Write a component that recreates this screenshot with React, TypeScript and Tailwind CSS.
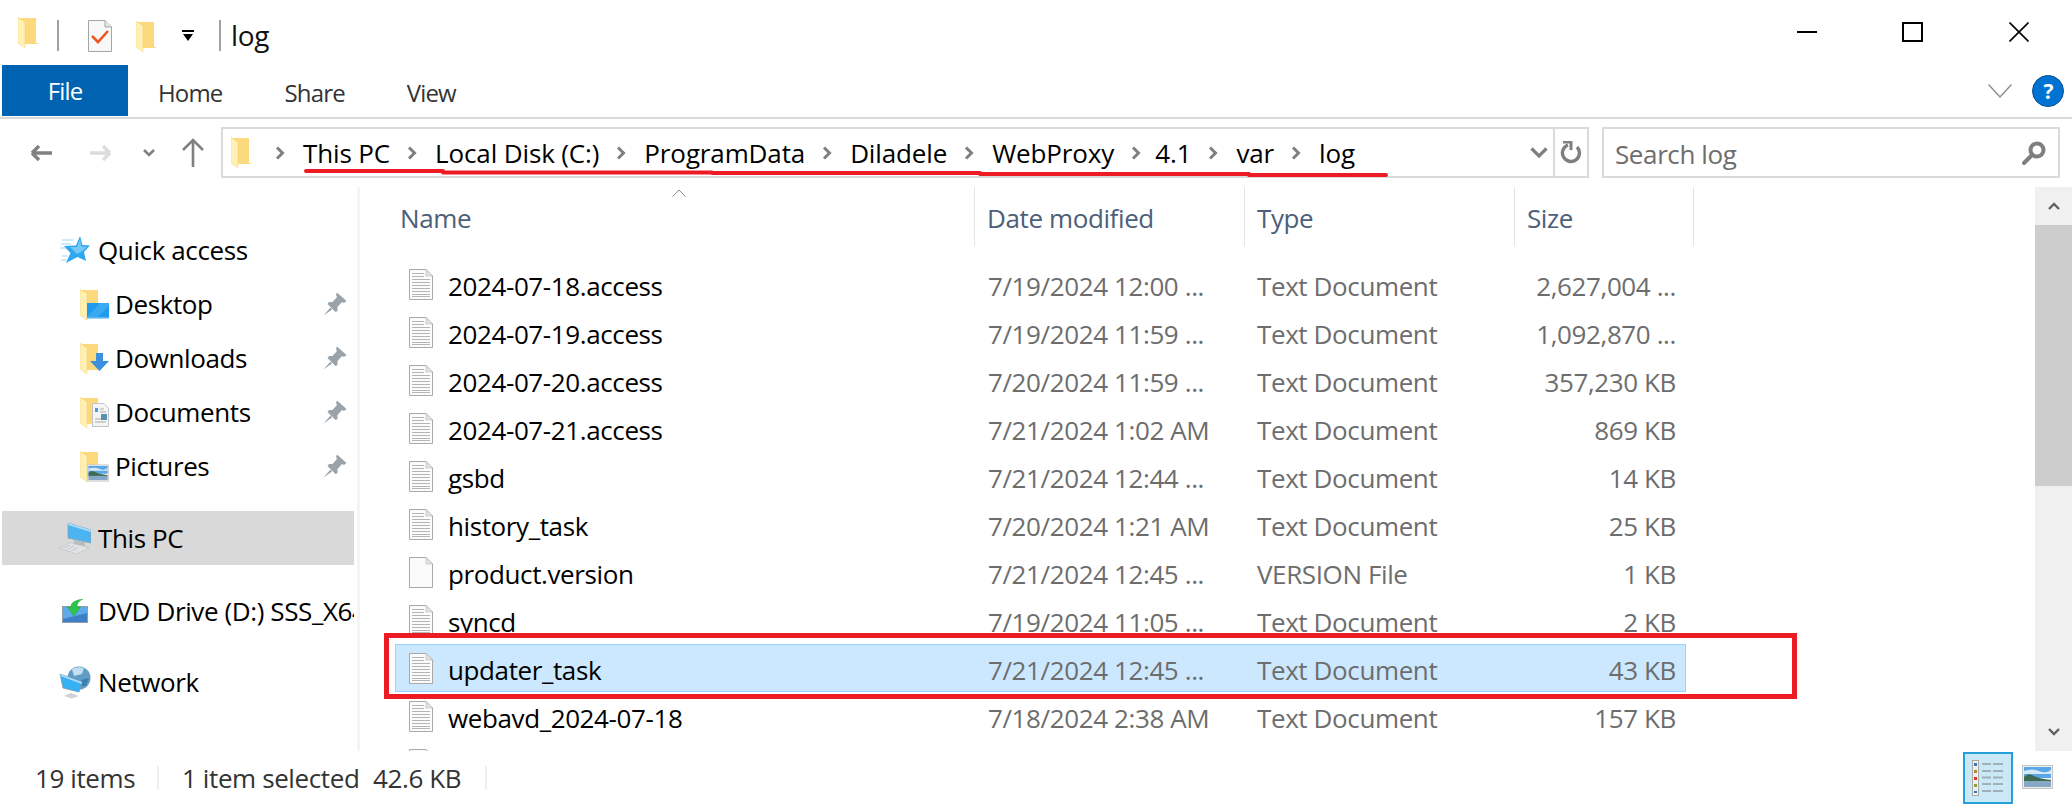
const font = "font-['Open_Sans','Noto_Sans',sans-serif]";

const rows = [
  { name: '2024-07-18.access', date: '7/19/2024 12:00 ...', type: 'Text Document', size: '2,627,004 ...' },
  { name: '2024-07-19.access', date: '7/19/2024 11:59 ...', type: 'Text Document', size: '1,092,870 ...' },
  { name: '2024-07-20.access', date: '7/20/2024 11:59 ...', type: 'Text Document', size: '357,230 KB' },
  { name: '2024-07-21.access', date: '7/21/2024 1:02 AM', type: 'Text Document', size: '869 KB' },
  { name: 'gsbd', date: '7/21/2024 12:44 ...', type: 'Text Document', size: '14 KB' },
  { name: 'history_task', date: '7/20/2024 1:21 AM', type: 'Text Document', size: '25 KB' },
  { name: 'product.version', date: '7/21/2024 12:45 ...', type: 'VERSION File', size: '1 KB', blank: true },
  { name: 'syncd', date: '7/19/2024 11:05 ...', type: 'Text Document', size: '2 KB' },
  { name: 'updater_task', date: '7/21/2024 12:45 ...', type: 'Text Document', size: '43 KB', selected: true },
  { name: 'webavd_2024-07-18', date: '7/18/2024 2:38 AM', type: 'Text Document', size: '157 KB' },
  { name: '', date: '', type: '', size: '' },
];

const crumbs = ['This PC', 'Local Disk (C:)', 'ProgramData', 'Diladele', 'WebProxy', '4.1', 'var', 'log'];

function Folder({ className = '' }: { className?: string }) {
  return (
    <svg viewBox="0 0 20 31" className={className}>
      <path d="M0 1 H18 V26 H20 V27 H7 L0 26 Z" fill="#fbd97c" />
      <path d="M0 0 L7 5 V31 L0 26 Z" fill="#fff0b5" />
      <path d="M0 0 L7 5 V31 L0 26 Z" fill="none" stroke="#f2c95f" strokeWidth="0.4" />
    </svg>
  );
}

function FileIcon({ blank = false }: { blank?: boolean }) {
  return (
    <svg viewBox="0 0 24 31" className="h-[31px] w-6 shrink-0">
      <path d="M0.5 0.5 H17 L23.5 7 V30.5 H0.5 Z" fill="#fbfbfb" stroke="#a9a9a9" />
      <path d="M17 0.5 V7 H23.5 Z" fill="#e4e4e4" stroke="#b5b5b5" strokeWidth="0.6" />
      {!blank && (
        <path
          d="M3 4.5 H15 M3 7.5 H15 M3 10.5 H21 M3 13.5 H21 M3 16.5 H21 M3 19.5 H21 M3 22.5 H21 M3 25.5 H21 M3 27.5 H21"
          stroke="#b4b4b4"
          strokeWidth="1"
        />
      )}
    </svg>
  );
}

function Chevron({ className = '' }: { className?: string }) {
  return (
    <svg viewBox="0 0 10 14" className={`h-3.5 w-2.5 shrink-0 ${className}`}>
      <path d="M2 1.5 L7.5 7 L2 12.5" fill="none" stroke="#7f7f7f" strokeWidth="3" />
    </svg>
  );
}

function Pin() {
  return (
    <svg viewBox="0 0 24 24" className="h-6 w-6 shrink-0">
      <path d="M14 0.5 L23.5 9 L21 11 L19 10 L14.5 15 L14.5 19 L12.5 20 L4.5 12 L6 10 L9.5 10 L14 5 L13 3 Z" fill="#9aa3a9" />
      <path d="M7.5 15.5 L0.5 23.5 L9 17.5 Z" fill="#9aa3a9" />
    </svg>
  );
}

function Star() {
  return (
    <svg viewBox="0 0 30 28" className="h-7 w-[30px] shrink-0">
      <path d="M2 4 H14 M1 8 H11 M0 12 H8 M2 20 H8 M1 24 H7" stroke="#bfe3fb" strokeWidth="1.4" />
      <path d="M20 0 L22.5 9 L30 9.5 L24 16 L26 25 L17.5 21 L6 27 L10.5 17 L4 10 L16 9.5 Z" fill="#2fa6f0" />
      <path d="M20 3 L21.5 10.5 L27 11 L22 15.5 L17 18 L10 11 L17 11 Z" fill="#74c8f8" />
    </svg>
  );
}

function DesktopFolder() {
  return (
    <div className="relative h-[31px] w-[29px] shrink-0">
      <Folder className="h-[31px] w-5" />
      <svg viewBox="0 0 22 16" className="absolute bottom-px right-0 h-4 w-[22px]">
        <rect width="22" height="16" fill="#1e9bee" />
        <path d="M0 16 H22 V14.5 H0 Z" fill="#9fd2f5" />
        <path d="M0 14 L13 0 H22 V3 L11 14 Z" fill="#53b9f6" opacity="0.5" />
      </svg>
    </div>
  );
}

function DownloadsFolder() {
  return (
    <div className="relative h-[31px] w-[29px] shrink-0">
      <Folder className="h-[31px] w-5" />
      <svg viewBox="0 0 19 18" className="absolute bottom-[3px] right-0 h-[18px] w-[19px]">
        <path d="M6 0 H13 V8 H19 L9.5 18 L0 8 H6 Z" fill="#3c8fdc" />
      </svg>
    </div>
  );
}

function DocumentsFolder() {
  return (
    <div className="relative h-[31px] w-[29px] shrink-0">
      <Folder className="h-[31px] w-5" />
      <svg viewBox="0 0 17 24" className="absolute bottom-px right-0 h-6 w-[17px]">
        <path d="M0.5 0.5 H12 L16.5 5 V23.5 H0.5 Z" fill="#f5f5f5" stroke="#c4c4c4" />
        <path d="M3 5 H6 V9 H3 Z" fill="#4a9ae0" />
        <path d="M8 6 H12 M8 9 H14 M3 19 H14 M3 16 H9" stroke="#a9a9a9" />
        <rect x="9" y="11" width="6" height="6" fill="#5a8fb0" />
      </svg>
    </div>
  );
}

function Landscape({ className = '' }: { className?: string }) {
  return (
    <svg viewBox="0 0 31 24" className={className}>
      <rect x="0.5" y="0.5" width="30" height="23" fill="#efefef" stroke="#c4c4c4" />
      <rect x="2" y="2" width="27" height="11" fill="#5aa6e6" />
      <path d="M2 6 Q10 3 17 6 T29 5 V9 H2 Z" fill="#d4e9f8" />
      <path d="M2 12 Q6 8 10 10 Q17 14 29 15 V17 H2 Z" fill="#3f6b55" />
      <rect x="2" y="16" width="27" height="6" fill="#86a8c4" />
    </svg>
  );
}

function PicturesFolder() {
  return (
    <div className="relative h-[31px] w-[29px] shrink-0">
      <Folder className="h-[31px] w-5" />
      <Landscape className="absolute bottom-0 right-0 h-[18px] w-[22px]" />
    </div>
  );
}

function Computer() {
  return (
    <svg viewBox="0 0 32 33" className="h-[33px] w-8 shrink-0">
      <path d="M9 1 L32 8 V21 L9 16 Z" fill="#4db4f4" stroke="#8aa0ae" strokeWidth="0.8" />
      <path d="M9 1 L32 8 V10 L9 3 Z" fill="#a9dcf9" />
      <path d="M15 18 L26 20.5 V24 L15 22 Z" fill="#b4bcc2" />
      <path d="M0 26 L11 20.5 L30 26 L18 32 Z" fill="#e1e3e5" stroke="#b9bdc0" strokeWidth="0.6" />
      <path d="M4 26 L11 23 M8 27.5 L15 24 M12 29 L19 25.5" stroke="#b9bdc0" strokeWidth="0.8" />
    </svg>
  );
}

function Dvd() {
  return (
    <svg viewBox="0 0 26 24" className="h-6 w-[26px] shrink-0">
      <rect x="0.5" y="7.5" width="25" height="16" fill="#3d7fc9" stroke="#929ea8" />
      <path d="M1 8 H25 V14 L1 20 Z" fill="#5ea9e8" />
      <path d="M12 17 L5.5 8 H9 C9 3 14 1 21 0 C17 2 15 4 15 8 H18.5 Z" fill="#2ec44a" stroke="#23a03a" strokeWidth="0.5" />
    </svg>
  );
}

function NetworkIcon() {
  return (
    <svg viewBox="0 0 32 33" className="h-[33px] w-8 shrink-0">
      <circle cx="20" cy="12" r="11.5" fill="#5f9cc7" />
      <path d="M13 3 Q19 0 25 2 L23 8 L15 10 Z" fill="#c3deef" />
      <path d="M22 14 L30 12 L27 20 L23 20 Z" fill="#3f7fa9" />
      <path d="M1 8 L23 16 L20 26 L4 22 Z" fill="#35b0f5" stroke="#7f97a6" strokeWidth="0.8" />
      <path d="M1 8 L23 16 L22.5 18 L1.5 10 Z" fill="#a7daf8" />
      <path d="M5 30 L12 27 L20 30 L13 32.5 Z" fill="#cfd3d6" />
    </svg>
  );
}

function NavRow({ icon, label, pin = false, active = false, indent = false }: {
  icon: React.ReactNode;
  label: string;
  pin?: boolean;
  active?: boolean;
  indent?: boolean;
}) {
  return (
    <div className={`flex h-[54px] items-center overflow-hidden ${indent ? 'pl-[78px]' : 'pl-[54px]'} ${active ? 'bg-[#d9d9d9]' : ''}`}>
      <div className={`flex shrink-0 items-center ${indent ? 'w-[31px]' : 'w-[38px] justify-center'}`}>{icon}</div>
      <span className="ml-1 whitespace-nowrap text-black">{label}</span>
      {pin && (
        <span className="ml-auto mr-[7px]">
          <Pin />
        </span>
      )}
    </div>
  );
}

export default function App() {
  return (
    <div className={`relative flex h-[805px] w-[2072px] flex-col overflow-hidden bg-white text-[26px] leading-none tracking-[-0.015em] ${font}`}>
      {/* title bar */}
      <div className="flex h-[65px] shrink-0 items-start">
        <Folder className="ml-[18px] mt-[17px] h-[31px] w-5" />
        <div className="ml-[19px] mt-5 h-[31px] w-0.5 bg-[#a0a0a0]" />
        <svg viewBox="0 0 24 32" className="ml-[29px] mt-5 h-8 w-6">
          <path d="M0.5 0.5 H17 L23.5 7 V31.5 H0.5 Z" fill="#f8f8f8" stroke="#a5a5a5" />
          <path d="M17 0.5 V7 H23.5" fill="#e6e6e6" stroke="#a5a5a5" />
          <path d="M4 16 L10 22 L20 11" fill="none" stroke="#f0561e" strokeWidth="2.6" />
        </svg>
        <Folder className="ml-6 mt-[21px] h-[31px] w-5" />
        <svg viewBox="0 0 12 11" className="ml-[26px] mt-[30px] h-[11px] w-3">
          <path d="M0 0 H12 V2 H0 Z M1 4 H11 L6 11 Z" fill="#000" />
        </svg>
        <div className="ml-[25px] mt-5 h-[31px] w-0.5 bg-[#a0a0a0]" />
        <span className="ml-[10px] mt-[21px] text-[28px] text-[#111]">log</span>
        <div className="ml-auto mt-[22px] flex items-start">
          <div className="mt-[9px] h-0.5 w-5 bg-black" />
          <div className="ml-[85px] h-5 w-[21px] border-2 border-black" />
          <svg viewBox="0 0 20 20" className="ml-[86px] mr-[43px] h-5 w-5">
            <path d="M0.5 0.5 L19.5 19.5 M19.5 0.5 L0.5 19.5" stroke="#000" strokeWidth="1.6" />
          </svg>
        </div>
      </div>

      {/* ribbon tabs */}
      <div className="flex h-[54px] shrink-0 items-start border-b-2 border-[#dadada] text-[24px] tracking-[-0.035em]">
        <div className="ml-0.5 flex h-[51px] w-[126px] items-center justify-center bg-[#0063b1] text-white">File</div>
        <span className="ml-[30px] mt-[16px] text-[#333]">Home</span>
        <span className="ml-[62px] mt-[16px] text-[#333]">Share</span>
        <span className="ml-[62px] mt-[16px] text-[#333]">View</span>
        <div className="ml-auto mr-2 flex items-center gap-5 pt-2.5">
          <svg viewBox="0 0 24 14" className="h-3.5 w-6">
            <path d="M0.5 0.5 L12 13 L23.5 0.5" fill="none" stroke="#8c8c8c" strokeWidth="1.4" />
          </svg>
          <div className="flex h-8 w-8 items-center justify-center rounded-full border border-[#0a4f94] bg-[#0072d2] text-[21px] font-bold text-white">?</div>
        </div>
      </div>

      {/* address bar */}
      <div className="mt-2 flex h-[51px] shrink-0 items-center">
        <div className="flex w-[221px] shrink-0 items-center">
          <svg viewBox="0 0 22 18" className="ml-[31px] h-[18px] w-[22px]">
            <path d="M1 9 H21 M1 9 L8 2 M1 9 L8 16" fill="none" stroke="#808080" strokeWidth="3.4" />
          </svg>
          <svg viewBox="0 0 22 18" className="ml-[36px] h-[18px] w-[22px]">
            <path d="M1 9 H21 M21 9 L14 2 M21 9 L14 16" fill="none" stroke="#dcdcdc" strokeWidth="3.4" />
          </svg>
          <svg viewBox="0 0 12 8" className="ml-8 h-2 w-3">
            <path d="M1 1 L6 6 L11 1" fill="none" stroke="#808080" strokeWidth="2.6" />
          </svg>
          <svg viewBox="0 0 22 29" className="ml-[27px] h-[29px] w-[22px]">
            <path d="M11 29 V2 M1 12 L11 2 L21 12" fill="none" stroke="#808080" strokeWidth="2.6" />
          </svg>
        </div>
        <div className="flex h-[51px] w-[1368px] shrink-0 items-center border-2 border-[#dadada] pl-2">
          <Folder className="h-[31px] w-5 shrink-0" />
          <div className="ml-6 flex items-center gap-[17px] tracking-[-0.005em] text-black">
            {crumbs.map((c) => (
              <div key={c} className="flex items-center gap-[18px]">
                <Chevron />
                <span className={c === '4.1' ? '-ml-1' : ''}>{c}</span>
              </div>
            ))}
          </div>
          <svg viewBox="0 0 18 12" className="ml-auto h-3 w-[18px] shrink-0">
            <path d="M1.5 1.5 L9 9 L16.5 1.5" fill="none" stroke="#7f7f7f" strokeWidth="3.2" />
          </svg>
          <div className="ml-[5px] flex h-full w-[34px] shrink-0 items-center justify-center border-l-2 border-[#dadada]">
            <svg viewBox="0 0 22 24" className="h-6 w-[22px]">
              <path d="M8 4 A8.5 8.5 0 1 0 17 6" fill="none" stroke="#7f7f7f" strokeWidth="3.4" />
              <path d="M3 1 H11 V9" fill="none" stroke="#7f7f7f" strokeWidth="3" />
            </svg>
          </div>
        </div>
        <div className="ml-[13px] flex h-[51px] w-[458px] shrink-0 items-center justify-between border-2 border-[#dadada] pl-[11px] pr-[12px] text-[#6d6d6d]">
          <span className="pt-0.5">Search log</span>
          <svg viewBox="0 0 24 24" className="h-6 w-6">
            <circle cx="15" cy="9" r="6.5" fill="none" stroke="#7f7f7f" strokeWidth="4" />
            <path d="M10 14 L2 22" stroke="#7f7f7f" strokeWidth="4" strokeLinecap="round" />
          </svg>
        </div>
      </div>

      {/* body */}
      <div className="mt-[9px] flex h-[564px] shrink-0">
        <div className="flex w-[357px] shrink-0 flex-col">
          <div className="pl-0.5 pr-[3px] pt-9">
            <NavRow icon={<Star />} label="Quick access" />
            <NavRow icon={<DesktopFolder />} label="Desktop" pin indent />
            <NavRow icon={<DownloadsFolder />} label="Downloads" pin indent />
            <NavRow icon={<DocumentsFolder />} label="Documents" pin indent />
            <NavRow icon={<PicturesFolder />} label="Pictures" pin indent />
            <div className="h-[18px]" />
            <NavRow icon={<Computer />} label="This PC" active />
            <div className="h-[19px]" />
            <NavRow icon={<Dvd />} label="DVD Drive (D:) SSS_X64FRE_EN-US" />
            <div className="h-[17px]" />
            <NavRow icon={<NetworkIcon />} label="Network" />
          </div>
        </div>
        <div className="w-[3px] shrink-0 bg-[#f5f5f5]" />

        <div className="relative flex min-w-0 flex-1 flex-col overflow-hidden">
          {/* header */}
          <div className="flex h-[59px] shrink-0 items-center text-[#4c607a]">
            <div className="relative flex h-full w-[614px] shrink-0 items-center pl-10 pt-0.5">
              Name
              <svg viewBox="0 0 14 8" className="absolute left-[312px] top-[2px] h-2 w-3.5">
                <path d="M0.5 7.5 L7 1 L13.5 7.5" fill="none" stroke="#8c8c8c" strokeWidth="1" />
              </svg>
            </div>
            <div className="flex h-full w-[270px] shrink-0 items-center border-l border-[#e5e5e5] pl-3 pt-0.5">Date modified</div>
            <div className="flex h-full w-[270px] shrink-0 items-center border-l border-[#e5e5e5] pl-3 pt-0.5">Type</div>
            <div className="flex h-full w-[180px] shrink-0 items-center border-x border-[#e5e5e5] pl-3 pt-0.5">Size</div>
          </div>
          {/* rows */}
          <div className="mt-[14px] flex flex-col pl-[35px]">
            {rows.map((r, i) => (
              <div
                key={i}
                className={`flex h-[48px] w-[1291px] shrink-0 items-center border ${r.selected ? 'border-[#99d1ff] bg-[#cce8ff]' : 'border-transparent'}`}
              >
                <div className="ml-[13px] flex w-[566px] shrink-0 items-center gap-[15px] text-black">
                  <FileIcon blank={r.blank} />
                  <span className="pt-1">{r.name}</span>
                </div>
                <div className="w-[269px] shrink-0 whitespace-nowrap pl-[13px] pt-1 text-[#6d6d6d]">{r.date}</div>
                <div className="w-[240px] shrink-0 pl-[13px] pt-1 text-[#6d6d6d]">{r.type}</div>
                <div className="w-[192px] shrink-0 whitespace-nowrap pt-1 text-right text-[#6d6d6d]">{r.size}</div>
              </div>
            ))}
          </div>
        </div>

        {/* scrollbar */}
        <div className="flex w-[37px] shrink-0 flex-col bg-[#f0f0f0]">
          <div className="flex h-[38px] shrink-0 items-center justify-center">
            <svg viewBox="0 0 12 8" className="h-2 w-3">
              <path d="M1 7 L6 2 L11 7" fill="none" stroke="#606060" strokeWidth="2.4" />
            </svg>
          </div>
          <div className="h-[261px] shrink-0 bg-[#cdcdcd]" />
          <div className="flex flex-1 items-end justify-center pb-[15px]">
            <svg viewBox="0 0 12 8" className="h-2 w-3">
              <path d="M1 1 L6 6 L11 1" fill="none" stroke="#606060" strokeWidth="2.4" />
            </svg>
          </div>
        </div>
      </div>

      {/* status bar */}
      <div className="flex flex-1 items-center text-[#333]">
        <span className="ml-[35px] w-[122px] shrink-0">19 items</span>
        <div className="h-[24px] w-0.5 bg-[#efefef]" />
        <span className="ml-[23px] w-[191px] shrink-0 whitespace-nowrap">1 item selected</span>
        <span className="shrink-0">42.6 KB</span>
        <div className="ml-6 h-[24px] w-0.5 bg-[#efefef]" />
        <div className="ml-auto mr-[59px] flex h-[52px] w-[50px] items-center justify-center border-2 border-[#26a0da] bg-[#cbe8f6]">
          <svg viewBox="0 0 32 36" className="h-9 w-8">
            <rect x="0.5" y="0.5" width="6" height="35" fill="#f0f0f0" stroke="#a8a8a8" />
            <path d="M2 3 H5 V6 H2 Z" fill="#3b78b5" />
            <path d="M2 10 H5 V13 H2 Z" fill="#b08a30" />
            <path d="M2 17 H5 V20 H2 Z" fill="#d63a20" />
            <path d="M2 24 H5 V27 H2 Z" fill="#8aa040" />
            <path d="M2 31 H5 V33 H2 Z" fill="#3b78b5" />
            <path d="M10 4 H19 M21 4 H31 M10 31 H19 M21 31 H31 M10 11 H19 M21 11 H31 M10 17.5 H19 M21 17.5 H31 M10 24 H19 M21 24 H31" stroke="#9fb0b8" strokeWidth="2" />
          </svg>
        </div>
      </div>
      <Landscape className="absolute left-[2022px] top-[765px] h-6 w-[31px]" />

      {/* red annotations */}
      <svg viewBox="0 0 2072 805" className="pointer-events-none absolute inset-0 h-[805px] w-[2072px]">
        <path d="M306 171 H443 M443 172.5 H712 M712 173 H980 M980 174 H1249 M1249 175 H1386" stroke="#ed1c24" strokeWidth="4" strokeLinecap="round" fill="none" />
      </svg>
      <div className="pointer-events-none absolute left-[384px] top-[633px] h-[66px] w-[1413px] border-[5px] border-[#ed1c24]" />
    </div>
  );
}
